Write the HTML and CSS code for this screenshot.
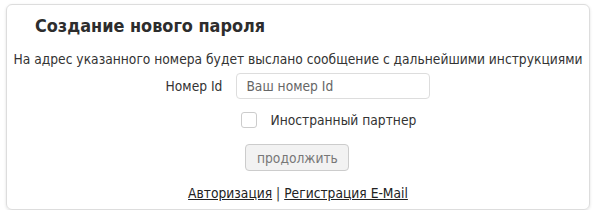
FILE: index.html
```html
<!DOCTYPE html>
<html lang="ru">
<head>
    <meta charset="UTF-8">
    <title>Создание нового пароля</title>
    <link rel="stylesheet" href="styles.css">
</head>
<body>
    <div class="card">
        <h2 class="card-title">Создание нового пароля</h2>
        <p class="hint">На адрес указанного номера будет выслано сообщение с дальнейшими инструкциями</p>
        <form class="reset-form" onsubmit="return false">
            <label for="partnerId" class="field-label">Номер Id</label>
            <input type="text" id="partnerId" class="field-input" placeholder="Ваш номер Id">

            <span></span>
            <label class="check-row">
                <input type="checkbox" class="check-box">
                <span>Иностранный партнер</span>
            </label>

            <span></span>
            <div class="btn-cell">
                <button type="submit" class="btn">продолжить</button>
            </div>
        </form>
        <div class="links">
            <a href="#">Авторизация</a> | <a href="#">Регистрация E-Mail</a>
        </div>
    </div>
</body>
</html>
```

FILE: styles.css
```css
body {
    font-family: "DejaVu Sans Condensed", "DejaVu Sans", sans-serif;
    font-size: 13.7px;
    line-height: 18px;
    color: #333;
    background-color: #fff;
    margin: 0;
    padding: 4px 10px 0 6px;
}
.card {
    border: 1px solid #ddd;
    border-radius: 6px;
    box-shadow: 0 1px 3px rgba(0, 0, 0, 0.12);
    padding: 10px 0 0;
    box-sizing: border-box;
    height: 206px;
}
.card-title {
    font-size: 17.9px;
    line-height: 22px;
    font-weight: bold;
    margin: 0 0 13px 28px;
    color: #2d2d2d;
}
.hint {
    text-align: center;
    margin: 0 0 5px;
}
.reset-form {
    display: grid;
    grid-template-columns: auto auto;
    justify-content: center;
    align-items: center;
    column-gap: 14px;
}
.field-label {
    text-align: right;
}
.field-input {
    width: 194px;
    height: 26px;
    box-sizing: border-box;
    padding: 0 9px;
    border: 1px solid #ddd;
    border-radius: 4px;
    font-family: inherit;
    font-size: 13.7px;
    color: #333;
}
.field-input::placeholder {
    color: #666;
}
.check-row {
    display: flex;
    align-items: center;
    gap: 13px;
    padding-left: 5px;
    margin-top: 12px;
}
.check-box {
    appearance: none;
    width: 16px;
    height: 16px;
    margin: 0;
    border: 1px solid #ccc;
    border-radius: 3px;
    background: #fff;
}
.btn-cell {
    padding-left: 9px;
    margin-top: 15px;
}
.btn {
    height: 27px;
    width: 104px;
    padding: 0;
    border: 1px solid #ccc;
    border-radius: 4px;
    background: #f2f2f2;
    color: #777;
    font-family: inherit;
    font-size: 13.7px;
}
.links {
    text-align: center;
    margin-top: 13px;
}
.links a {
    color: #222;
}
```
